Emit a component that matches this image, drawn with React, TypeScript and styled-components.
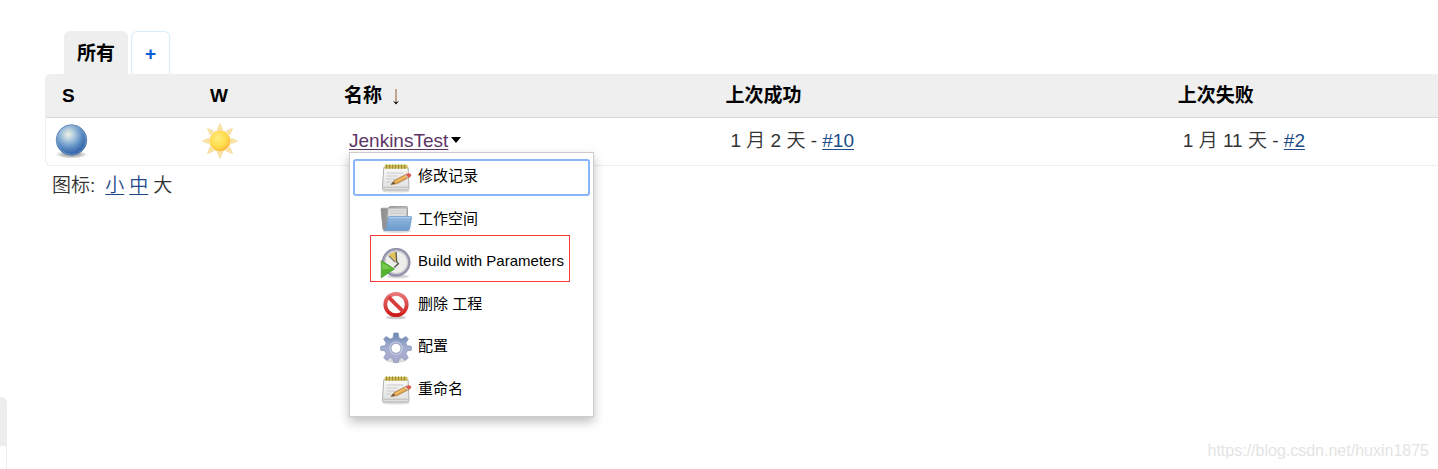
import React from "react";
import styled, { createGlobalStyle, css } from "styled-components";

const GlobalStyle = createGlobalStyle`
  *, *::before, *::after { box-sizing: border-box; }
  body {
    margin: 0;
    background: #fff;
    color: #333;
    font-family: "Liberation Sans", Arial, "Noto Sans CJK SC", sans-serif;
    font-size: 19px;
    font-weight: 350;
    overflow-x: hidden;
  }
`;

const Page = styled.div`
  position: relative;
  display: grid;
  grid-template-columns: 7px minmax(0, 1fr);
  column-gap: 38px;
  min-height: 100vh;
`;

const SidePanel = styled.aside`
  display: flex;
  flex-direction: column;
  padding-top: 397px;
`;

const PaneHeader = styled.div`
  height: 49px;
  background: #ededed;
  border: 1px solid #ededed;
  border-left: 0;
  border-top-right-radius: 6px;
`;

const PaneBody = styled.div`
  flex: 1;
  border-right: 1px solid #ededed;
`;

const Main = styled.main`
  padding-top: 31px;
`;

const TabBar = styled.nav`
  display: flex;
  gap: 3px;
  padding-left: 19px;
`;

const Tab = styled.a<{ $active?: boolean }>`
  height: 43px;
  padding: 0 13px;
  border: solid ${(p) => (p.$active ? "#eee" : "#d5ecfc")};
  border-width: ${(p) => (p.$active ? "1px 0 0" : "1px 1px 0")};
  border-radius: 6px 6px 0 0;
  background: ${(p) => (p.$active ? "#eee" : "#fff")};
  color: ${(p) => (p.$active ? "#000" : "#0b5cd5")};
  font-weight: 700;
  line-height: 44px;
  text-decoration: none;
`;

const TableFrame = styled.div`
  border: 1px solid #eee;
  border-right: 0;
  border-radius: 6px 0 0 6px;
`;

const JobTable = styled.table`
  width: 100%;
  table-layout: fixed;
  border-collapse: separate;
  border-spacing: 0;
`;

const Col = styled.col<{ $width?: string }>`
  width: ${(p) => p.$width ?? "auto"};
`;

const HeadCell = styled.th`
  height: 43px;
  padding: 0 0 0 16px;
  background: #efefef;
  border-bottom: 1px solid #d8d8d8;
  color: #000;
  font-weight: 700;
  line-height: 24px;
  text-align: left;
  white-space: nowrap;
`;

const SortArrow = styled.svg`
  width: 8px;
  height: 16px;
  margin-left: 10px;
  vertical-align: -3px;
`;

const Cell = styled.td<{ $icon?: boolean }>`
  height: 47px;
  padding: 0 0 2px ${(p) => (p.$icon ? "8px" : "21px")};
  line-height: 24px;
  white-space: nowrap;
`;

const StatusIcon = styled.svg`
  display: block;
  width: 36px;
  height: 36px;
`;

const link = css`
  text-decoration: underline;
  text-decoration-thickness: 1px;
  text-underline-offset: 2px;
`;

const Link = styled.a`
  ${link}
  color: #204a87;
`;

const JobLink = styled.a`
  ${link}
  color: #5c3566;
`;

const NameBox = styled.div`
  position: relative;
  display: flex;
  align-items: center;
  gap: 3px;
`;

const MenuToggle = styled.button`
  display: flex;
  padding: 0 0 2px;
  border: 0;
  background: none;
`;

const Menu = styled.ul`
  position: absolute;
  z-index: 1;
  top: 23px;
  left: 0;
  display: grid;
  grid-auto-rows: 1fr;
  width: 245px;
  height: 265px;
  margin: 0;
  padding: 4px;
  list-style: none;
  background: #fff;
  border: 1px solid #ccc;
  box-shadow: 0 5px 10px rgba(0, 0, 0, 0.25);
`;

const MenuItem = styled.li`
  position: relative;
  display: flex;
  align-items: center;
`;

const MenuLink = styled.a<{ $selected?: boolean }>`
  display: flex;
  flex: 1;
  align-items: center;
  gap: 6px;
  height: 33px;
  margin: 0 1px;
  padding-left: 25px;
  border-radius: 1px;
  outline: ${(p) => (p.$selected ? "2px solid #8ab5fa" : "0")};
  color: #000;
  font-size: 15px;
  font-weight: 400;
  text-decoration: none;
`;

const MenuText = styled.span`
  padding-bottom: 3px;
  line-height: 20px;
`;

const Highlight = styled.div`
  position: absolute;
  top: -7px;
  left: 16px;
  width: 200px;
  height: 47px;
  border: 1px solid #fb3b3b;
  pointer-events: none;
`;

const MenuSvg = styled.svg`
  flex: none;
  width: 32px;
  height: 32px;
`;

const IconSizes = styled.div`
  display: flex;
  gap: 5px;
  padding: 8px 7px 0;
  line-height: 24px;
`;

const SizeLabel = styled.span`
  margin-right: 5px;
`;

const Watermark = styled.div`
  position: absolute;
  right: 9px;
  bottom: 8px;
  color: #e4e4e4;
  font-size: 16px;
  line-height: 20px;
`;

const BlueBall = () => (
  <StatusIcon viewBox="0 0 36 36" role="img" aria-label="Success">
    <defs>
      <radialGradient id="ball" cx=".4" cy=".32" r=".68">
        <stop offset="0" stopColor="#f0f3e2" />
        <stop offset=".28" stopColor="#b0cbdf" />
        <stop offset=".65" stopColor="#5b8cc2" />
        <stop offset="1" stopColor="#2a5ba2" />
      </radialGradient>
      <radialGradient id="ballShadow">
        <stop offset=".5" stopColor="#777" stopOpacity=".55" />
        <stop offset="1" stopColor="#777" stopOpacity="0" />
      </radialGradient>
    </defs>
    <ellipse cx="17.5" cy="31.5" rx="16" ry="4" fill="url(#ballShadow)" />
    <circle cx="17.5" cy="17" r="15.3" fill="url(#ball)" stroke="#5480b3" strokeWidth=".8" />
    <circle cx="17.5" cy="17" r="14.3" fill="none" stroke="#8fb3d8" strokeWidth=".8" opacity=".6" />
  </StatusIcon>
);

const Sun = () => (
  <StatusIcon viewBox="0 0 36 36" role="img" aria-label="100%">
    <defs>
      <radialGradient id="sun" cx=".4" cy=".35" r=".7">
        <stop offset="0" stopColor="#ffed80" />
        <stop offset=".6" stopColor="#ffdc4c" />
        <stop offset="1" stopColor="#f9b33b" />
      </radialGradient>
    </defs>
    {[0, 45, 90, 135, 180, 225, 270, 315].map((a) => (
      <path
        key={a}
        d="M15.4 6.6 18 .4l2.6 6.2Z"
        fill="#fbe3a6"
        stroke="#f6d99c"
        strokeWidth=".8"
        transform={`rotate(${a} 18 18)`}
      />
    ))}
    <circle cx="18" cy="18" r="10.4" fill="url(#sun)" stroke="#f9cd62" strokeWidth=".7" />
  </StatusIcon>
);

const Notepad = () => (
  <MenuSvg viewBox="0 0 32 32" aria-hidden="true">
    <defs>
      <linearGradient id="paper" x2="0" y2="1">
        <stop offset="0" stopColor="#fafafa" />
        <stop offset="1" stopColor="#dedede" />
      </linearGradient>
    </defs>
    <ellipse cx="16" cy="29" rx="14" ry="1.6" fill="#000" opacity=".12" />
    <path d="M3.8 5.5h24.3l.9 20.8q0 1.7-1.7 1.7H4q-1.7 0-1.6-1.7Z" fill="url(#paper)" stroke="#b1b1ad" strokeWidth="1" />
    <path d="M3.2 25.2h25.2" stroke="#bdbdb9" strokeWidth="1" />
    <path d="M4.8 2.8h22.6v3.9H4.8z" fill="#c9b851" />
    <path d="M6.5 2.4v4.4M9.5 2.4v4.4M12.5 2.4v4.4M15.5 2.4v4.4M18.5 2.4v4.4M21.5 2.4v4.4M24.5 2.4v4.4" stroke="#a39235" strokeWidth="1" />
    <path d="M6.5 11h17M6.5 14h11M6.5 17h9M6.5 20h5" stroke="#c9c9c9" strokeWidth="1.2" />
    <path d="m11 22.5 3.2-4L27 11.9l2.6 3.2-12.6 6.5Z" fill="#e3a54b" stroke="#a97b42" strokeWidth=".8" />
    <path d="m15.5 19.7 11.7-6.1" stroke="#f8cf7c" strokeWidth="1" />
    <path d="m11 22.5 2.4-3 1.8 2.2Z" fill="#6b563b" />
    <path d="m25.7 12.6 2.6-1.4q2.4-.3 3 1.9 0 .8-.6 1.4l-2.6 1.3Z" fill="#db5a4c" />
    <path d="m25 13 .9-.5 2.3 3.1-1 .6Z" fill="#c9c9c9" />
  </MenuSvg>
);

const Folder = () => (
  <MenuSvg viewBox="0 0 32 32" aria-hidden="true">
    <defs>
      <linearGradient id="folder" x2="0" y2="1">
        <stop offset="0" stopColor="#92b9e0" />
        <stop offset="1" stopColor="#6c9acd" />
      </linearGradient>
      <linearGradient id="folderBack" x2="1">
        <stop offset="0" stopColor="#8c8c8c" />
        <stop offset="1" stopColor="#bdbdbd" />
      </linearGradient>
    </defs>
    <ellipse cx="17" cy="27.5" rx="14" ry="1.4" fill="#000" opacity=".14" />
    <path d="M1 5.2q0-1 1-1h6l2-1.7h16.5q1 0 1 1V26H4.2q-1.2 0-1.3-1.2Z" fill="url(#folderBack)" stroke="#949494" strokeWidth=".8" />
    <path d="M8.2 4.3h18.6l-.8 13H7.5Z" fill="#dedede" stroke="#b2b2b2" strokeWidth=".7" />
    <path d="M10 6.8h14.5M10 9.3h14.5" stroke="#c8c8c8" strokeWidth="1" />
    <path d="M8.3 13.4q.2-.8 1-.8h21.5q1 0 .8 1l-2 11.3q-.3 1.5-1.6 1.5H3.8q2.1-.4 2.5-2.2Z" fill="url(#folder)" stroke="#6c98c8" strokeWidth=".8" />
    <path d="M9.2 13.6h21.3" stroke="#bdd7f0" strokeWidth=".8" />
  </MenuSvg>
);

const BuildClock = () => (
  <MenuSvg viewBox="0 0 32 32" aria-hidden="true">
    <ellipse cx="18" cy="29.5" rx="11" ry="1.8" fill="#000" opacity=".16" />
    <circle cx="16.2" cy="15.3" r="13" fill="#ededea" stroke="#9a9ab2" strokeWidth="2.6" />
    <circle cx="16.2" cy="15.3" r="13.9" fill="none" stroke="#85859b" strokeWidth=".6" />
    <circle cx="16.2" cy="15.3" r="11.2" fill="none" stroke="#c1c1c9" strokeWidth=".8" />
    <path d="m15.8 15-7.4-6.7q3.2-3.6 8-3.6Z" fill="#e3c25d" />
    <path d="m16 5 .7 9.8 1.7 1.8-4.1 3.9" fill="none" stroke="#5f5f58" strokeWidth="1.4" />
    <path d="m9 9 6.5 6.4" stroke="#77776f" strokeWidth="1.2" />
    <path d="M1.3 13.5v17.3L14.4 22Z" fill="#54b52c" stroke="#4a9e2d" strokeWidth=".8" />
    <path d="m2.4 15.8 9.2 5.7-9.2 1Z" fill="#93d966" opacity=".6" />
  </MenuSvg>
);

const Forbidden = () => (
  <MenuSvg viewBox="0 0 32 32" aria-hidden="true">
    <defs>
      <linearGradient id="stop" x2="0" y2="1">
        <stop offset="0" stopColor="#ea7676" />
        <stop offset="1" stopColor="#cc1c1c" />
      </linearGradient>
    </defs>
    <ellipse cx="16" cy="28.5" rx="10" ry="1.8" fill="#000" opacity=".2" />
    <circle cx="16" cy="15.5" r="10.7" fill="#fff" stroke="url(#stop)" strokeWidth="3.8" />
    <path d="m8.6 8.1 14.8 14.8" stroke="#d93e3e" strokeWidth="3.8" />
  </MenuSvg>
);

const Gear = () => (
  <MenuSvg viewBox="0 0 32 32" aria-hidden="true">
    <defs>
      <linearGradient id="gear" x2="0" y2="1">
        <stop offset="0" stopColor="#6c85b2" />
        <stop offset=".5" stopColor="#a5afd0" />
        <stop offset="1" stopColor="#a9a9ce" />
      </linearGradient>
    </defs>
    <ellipse cx="16" cy="28.5" rx="10" ry="2" fill="#000" opacity=".15" />
    <path
      fillRule="evenodd"
      fill="url(#gear)"
      stroke="#8391b4"
      strokeWidth=".7"
      strokeLinejoin="round"
      d="M13.8 1h4.4l.8 4.9 2.9 1.2 3.9-2.7 2.6 2.7-2.6 3.8 1.2 2.8 4.3.6v3.9l-4.3.8-1.2 2.8 2.5 3.8-2.7 2.7-3.7-2.6-2.9 1.3-.8 3.6h-4.4l-.8-3.6-2.9-1.3-3.7 2.6-2.7-2.7L6.2 21.8 5 19l-4.3-.8v-3.9l4.3-.6 1.2-2.8-2.6-3.8 2.6-2.7 3.9 2.7L13 5.9ZM16 11.3a5 5 0 1 0 0 10 5 5 0 0 0 0-10Z"
    />
    <circle cx="16" cy="16.3" r="6.3" fill="none" stroke="#cdd2e4" strokeWidth="1.4" opacity=".7" />
  </MenuSvg>
);

const menuItems = [
  { label: "修改记录", Icon: Notepad, selected: true },
  { label: "工作空间", Icon: Folder },
  { label: "Build with Parameters", Icon: BuildClock, marked: true },
  { label: "删除 工程", Icon: Forbidden },
  { label: "配置", Icon: Gear },
  { label: "重命名", Icon: Notepad },
];

export default function App() {
  return (
    <>
      <GlobalStyle />
      <Page>
        <SidePanel>
          <PaneHeader />
          <PaneBody />
        </SidePanel>
        <Main>
          <TabBar>
            <Tab href="#all" $active>所有</Tab>
            <Tab href="#new">+</Tab>
          </TabBar>
          <TableFrame>
            <JobTable>
              <colgroup>
                <Col $width="148px" />
                <Col $width="134px" />
                <Col $width="27.4%" />
                <Col $width="32.5%" />
                <Col />
              </colgroup>
              <thead>
                <tr>
                  <HeadCell scope="col">S</HeadCell>
                  <HeadCell scope="col">W</HeadCell>
                  <HeadCell scope="col">
                    名称
                    <SortArrow viewBox="0 0 8 16" aria-hidden="true">
                      <path d="M4 0v15" stroke="#96582d" strokeWidth="1" />
                      <path d="M1 12 4 15.5 7 12 4 13.2Z" fill="#111" />
                    </SortArrow>
                  </HeadCell>
                  <HeadCell scope="col">上次成功</HeadCell>
                  <HeadCell scope="col">上次失败</HeadCell>
                </tr>
              </thead>
              <tbody>
                <tr>
                  <Cell $icon><BlueBall /></Cell>
                  <Cell $icon><Sun /></Cell>
                  <Cell>
                    <NameBox>
                      <JobLink href="#job">JenkinsTest</JobLink>
                      <MenuToggle type="button" aria-label="JenkinsTest menu" aria-expanded="true">
                        <svg width="10" height="6" viewBox="0 0 10 6" aria-hidden="true">
                          <path d="M0 0h10L5 6Z" fill="#000" />
                        </svg>
                      </MenuToggle>
                      <Menu>
                        {menuItems.map(({ label, Icon, selected, marked }) => (
                          <MenuItem key={label}>
                            <MenuLink href="#item" $selected={selected}>
                              <Icon />
                              <MenuText>{label}</MenuText>
                            </MenuLink>
                            {marked && <Highlight />}
                          </MenuItem>
                        ))}
                      </Menu>
                    </NameBox>
                  </Cell>
                  <Cell>1 月 2 天 - <Link href="#10">#10</Link></Cell>
                  <Cell>1 月 11 天 - <Link href="#2">#2</Link></Cell>
                </tr>
              </tbody>
            </JobTable>
          </TableFrame>
          <IconSizes>
            <SizeLabel>图标:</SizeLabel>
            <Link href="#small">小</Link>
            <Link href="#medium">中</Link>
            <span>大</span>
          </IconSizes>
        </Main>
        <Watermark>https://blog.csdn.net/huxin1875</Watermark>
      </Page>
    </>
  );
}
